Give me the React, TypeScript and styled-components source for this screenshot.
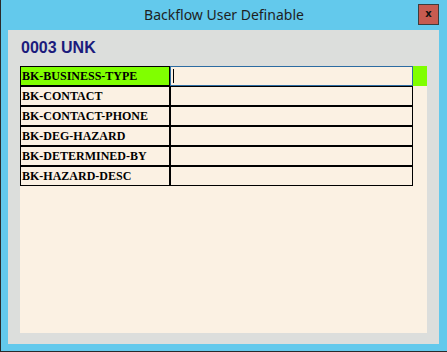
import styled, { createGlobalStyle } from "styled-components";

const GlobalStyle = createGlobalStyle`
	html, body {
		margin: 0;
		padding: 0;
		background: #63c9ec;
	}
`;

const fields = [
	"BK-BUSINESS-TYPE",
	"BK-CONTACT",
	"BK-CONTACT-PHONE",
	"BK-DEG-HAZARD",
	"BK-DETERMINED-BY",
	"BK-HAZARD-DESC",
];

export default function App() {
	return (
		<>
			<GlobalStyle />
			<Window>
				<TitleBar>
					<Title>Backflow User Definable</Title>
					<CloseButton>x</CloseButton>
				</TitleBar>
				<Panel>
					<Heading>0003 UNK</Heading>
					<Sheet>
						<Grid>
							{fields.map((name, i) => (
								<Row key={name}>
									<LabelCell $active={i === 0}>{name}</LabelCell>
									<ValueCell $active={i === 0}>{i === 0 && <Caret />}</ValueCell>
									<Marker $active={i === 0} />
								</Row>
							))}
						</Grid>
					</Sheet>
				</Panel>
			</Window>
		</>
	);
}

const Window = styled.div`
	width: 447px;
	height: 352px;
	box-sizing: border-box;
	background: #63c9ec;
	border-left: 1px solid #2a2a2a;
	border-bottom: 1px solid #2a2a2a;
	display: flex;
	flex-direction: column;
	padding: 0 8px 7px 7px;
`;

const TitleBar = styled.div`
	height: 30px;
	flex-shrink: 0;
	position: relative;
	display: flex;
	align-items: center;
	justify-content: center;
`;

const Title = styled.div`
	font-family: "Noto Sans", "Open Sans", sans-serif;
	font-size: 14px;
	color: #1e1e1e;
	margin-top: -1px;
	margin-left: 1px;
`;

const CloseButton = styled.div`
	position: absolute;
	right: 0;
	top: 4px;
	width: 21px;
	height: 21px;
	box-sizing: border-box;
	background: #c75b50;
	border: 1px solid #3d3d3d;
	display: flex;
	align-items: center;
	justify-content: center;
	font-family: "DejaVu Sans", sans-serif;
	font-weight: bold;
	font-size: 10px;
	color: #111;
	line-height: 1;
	padding-bottom: 2px;
`;

const Panel = styled.div`
	flex: 1;
	background: #dcdedc;
	display: flex;
	flex-direction: column;
	padding: 0 12px 11px 12px;
`;

const Heading = styled.div`
	height: 36px;
	box-sizing: border-box;
	padding-top: 9px;
	padding-left: 1px;
	font-family: "Liberation Sans", Arial, sans-serif;
	font-weight: bold;
	font-size: 16px;
	color: #1b1b7c;
`;

const Sheet = styled.div`
	flex: 1;
	background: #fbf1e3;
`;

const Grid = styled.div`
	display: flex;
	flex-direction: column;
`;

const Row = styled.div`
	display: flex;
	height: 20px;
`;

const LabelCell = styled.div<{ $active: boolean }>`
	width: 150px;
	box-sizing: border-box;
	border: 1px solid #000;
	background: ${({ $active }) => ($active ? "#80ff00" : "#fbf1e3")};
	font-family: "Liberation Serif", "Times New Roman", serif;
	font-weight: bold;
	font-size: 12px;
	color: #000;
	line-height: 18px;
	padding-left: 1px;
	white-space: nowrap;
	overflow: hidden;
`;

const ValueCell = styled.div<{ $active: boolean }>`
	width: 243px;
	box-sizing: border-box;
	border: 1px solid ${({ $active }) => ($active ? "#2d6ca2" : "#000")};
	background: #fbf1e3;
	display: flex;
	align-items: center;
	padding-left: 2px;
`;

const Caret = styled.span`
	display: block;
	width: 1px;
	height: 14px;
	background: #000;
`;

const Marker = styled.div<{ $active: boolean }>`
	width: 14px;
	background: ${({ $active }) => ($active ? "#80ff00" : "transparent")};
`;
